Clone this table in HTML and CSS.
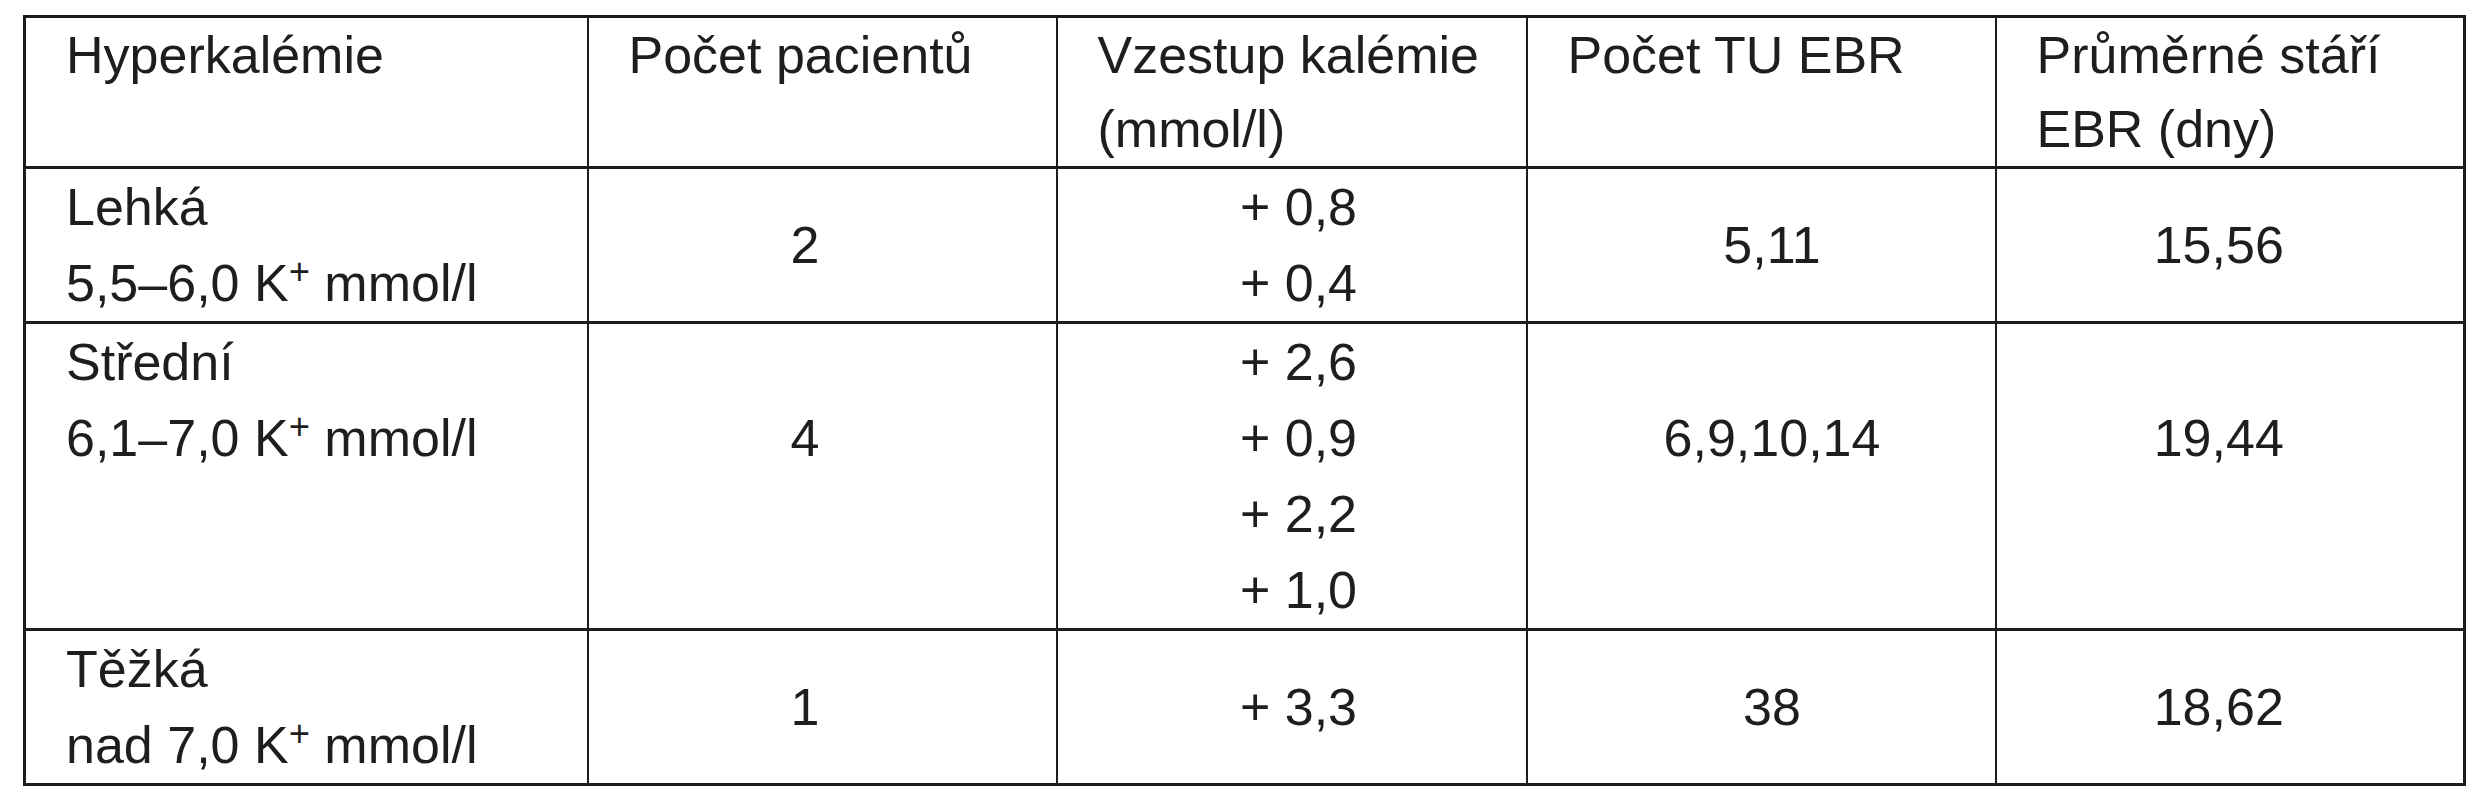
FILE: index.html
```html
<!DOCTYPE html>
<html lang="cs">
<head>
<meta charset="utf-8">
<title>Hyperkalémie</title>
<link rel="stylesheet" href="styles.css">
</head>
<body>
<div class="page">
  <table class="data">
    <colgroup>
      <col class="c1"><col class="c2"><col class="c3"><col class="c4"><col class="c5">
    </colgroup>
    <thead>
      <tr class="head">
        <th>Hyperkalémie</th>
        <th>Počet pacientů</th>
        <th>Vzestup kalémie<br>(mmol/l)</th>
        <th>Počet TU EBR</th>
        <th>Průměrné stáří<br>EBR (dny)</th>
      </tr>
    </thead>
    <tbody>
      <tr class="r2">
        <td class="label">Lehká<br>5,5–6,0 K<sup>+</sup> mmol/l</td>
        <td class="v v2">2</td>
        <td class="v v3">+ 0,8<br>+ 0,4</td>
        <td class="v v4">5,11</td>
        <td class="v v5">15,56</td>
      </tr>
      <tr class="r4">
        <td class="label">Střední<br>6,1–7,0 K<sup>+</sup> mmol/l</td>
        <td class="v v2 line2">4</td>
        <td class="v v3">+ 2,6<br>+ 0,9<br>+ 2,2<br>+ 1,0</td>
        <td class="v v4 line2">6,9,10,14</td>
        <td class="v v5 line2">19,44</td>
      </tr>
      <tr class="r2">
        <td class="label">Těžká<br>nad 7,0 K<sup>+</sup> mmol/l</td>
        <td class="v v2">1</td>
        <td class="v v3">+ 3,3</td>
        <td class="v v4">38</td>
        <td class="v v5">18,62</td>
      </tr>
    </tbody>
  </table>
</div>
</body>
</html>
```
FILE: styles.css
```css
html, body {
  margin: 0;
  padding: 0;
  background: #ffffff;
}

.page {
  padding: 15px 0 0 23px;
}

.data {
  border-collapse: collapse;
  table-layout: fixed;
  width: 2440px;
  border: 3px solid #1c1c1c;
  font-family: "Liberation Sans", Arial, sans-serif;
  font-size: 52px;
  color: #1e1e1e;
}

.c1 { width: 563px; }
.c2 { width: 469px; }
.c3 { width: 470px; }
.c4 { width: 469px; }
.c5 { width: 469px; }

.data th,
.data td {
  padding: 0 0 0 40px;
  border-left: 2px solid #1c1c1c;
  border-right: 2px solid #1c1c1c;
  border-top: 3px solid #1c1c1c;
  border-bottom: 3px solid #1c1c1c;
  line-height: 76px;
  font-weight: normal;
  text-align: left;
  vertical-align: top;
  white-space: nowrap;
}

.data th {
  line-height: 74px;
  height: 148px;
}

.r2 td { height: 149px; }
.r4 td { height: 302px; }

.data td.v {
  text-align: center;
  vertical-align: middle;
  padding: 0;
}

.data td.v2 { padding-right: 34px; }
.data td.v3 { padding-left: 14px; }
.data td.v4 { padding-left: 22px; }
.data td.v5 { padding-right: 22px; }

.r4 td.line2 {
  vertical-align: top;
  padding-top: 76px;
  height: 226px;
}

.data sup {
  font-size: 0.7em;
  line-height: 0;
  vertical-align: 17px;
}
```
